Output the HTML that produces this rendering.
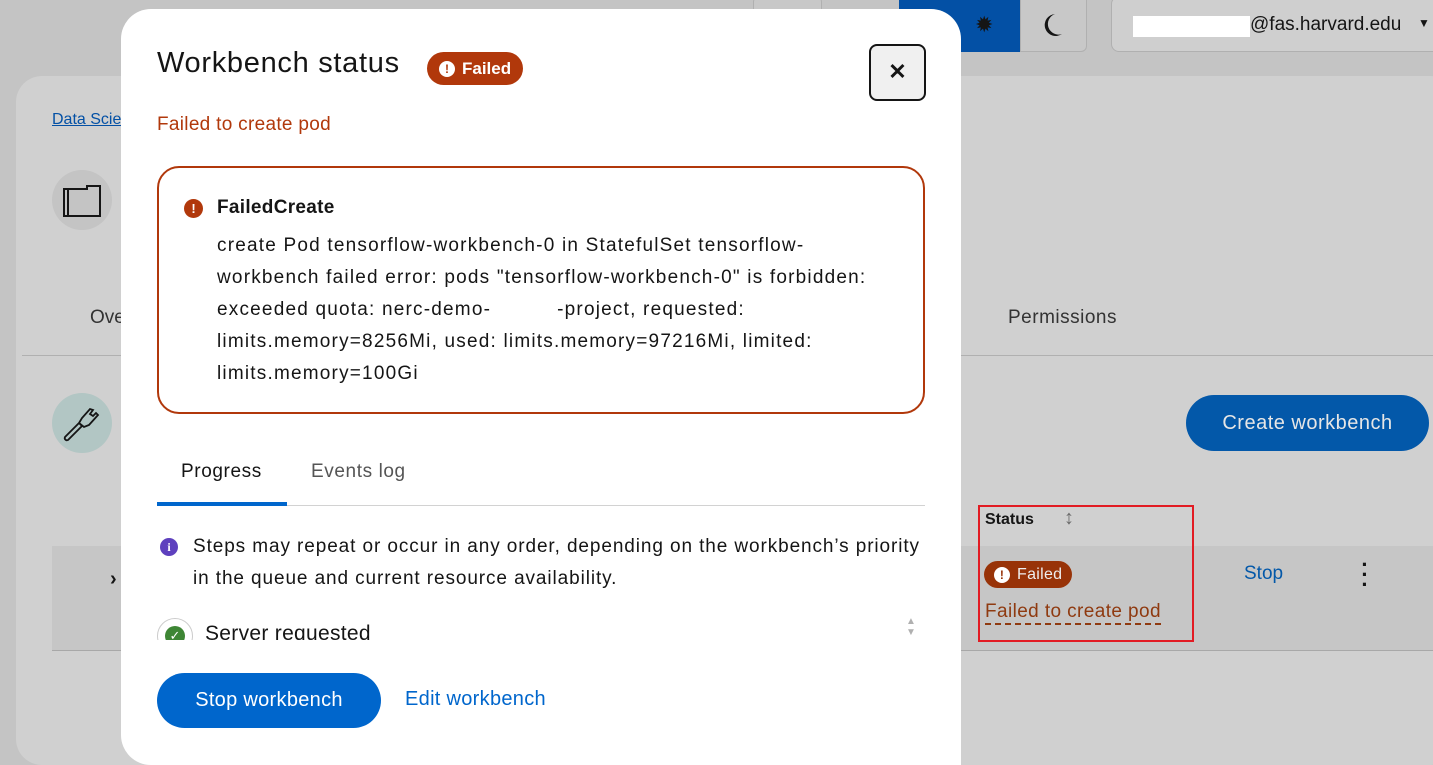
<!DOCTYPE html>
<html><head><meta charset="utf-8">
<style>
*{box-sizing:border-box;margin:0;padding:0}
body{width:1433px;height:765px;overflow:hidden;background:#c4c4c4;font-family:"Liberation Sans",sans-serif;position:relative;color:#151515}
.abs{position:absolute;white-space:nowrap}
.card{left:16px;top:76px;width:1440px;height:689px;background:#d0d0d0;border-radius:26px}
.modal{left:121px;top:9px;width:840px;height:756px;background:#fff;border-radius:30px 30px 0 30px}
.badge{display:inline-flex;align-items:center;background:#b1380b;color:#fff;border-radius:20px;font-size:17px;height:33px;padding:0 12px 0 12px;gap:7px}
.ex{width:16px;height:16px;border-radius:50%;background:#fff;color:#b1380b;font-weight:bold;font-size:12px;display:flex;align-items:center;justify-content:center}
</style></head><body>
<!-- background page -->
<div class="abs" style="left:753px;top:-4px;width:69px;height:56px;border:1px solid #b0b0b0;border-radius:6px;background:#c8c8c8"></div>
<div class="abs" style="left:899px;top:0;width:121px;height:52px;background:#0350a5"></div>
<div class="abs" style="left:975px;top:12px;font-size:22px;color:#151515">✹</div>
<div class="abs" style="left:1020px;top:-4px;width:67px;height:56px;background:#c8c8c8;border:1px solid #b0b0b0;border-radius:0 0 6px 0"></div>
<svg class="abs" style="left:1043px;top:13px" width="20" height="24" viewBox="0 0 20 24"><path d="M12 1A11 11 0 1 0 19 21A9 9 0 1 1 12 1z" fill="#151515"/></svg>
<div class="abs" style="left:1111px;top:-4px;width:340px;height:56px;border:1px solid #b0b0b0;border-radius:8px;background:#cfcfcf"></div>
<div class="abs" style="left:1133px;top:16px;width:117px;height:21px;background:#fff"></div>
<div class="abs" style="left:1250px;top:14px;font-size:19px;color:#151515">@fas.harvard.edu</div>
<div class="abs" style="left:1418px;top:16px;font-size:12px">▼</div>
<div class="abs card"></div>
<div class="abs" style="left:52px;top:111px;font-size:16px;color:#0350a5;text-decoration:underline">Data Science</div>
<div class="abs" style="left:52px;top:170px;width:60px;height:60px;border-radius:50%;background:#c4c4c4"></div>
<svg class="abs" style="left:63px;top:183px" width="38" height="34" viewBox="0 0 38 34"><path d="M1 6v27h36V3H24v3z M5 6v27" fill="none" stroke="#151515" stroke-width="2"/></svg>
<div class="abs" style="left:90px;top:307px;font-size:19px;color:#333">Overview</div>
<div class="abs" style="left:1008px;top:307px;font-size:19px;color:#333;letter-spacing:0.5px">Permissions</div>
<div class="abs" style="left:22px;top:355px;width:1420px;height:1px;background:#b0b0b0"></div>
<div class="abs" style="left:52px;top:393px;width:60px;height:60px;border-radius:50%;background:#b2c6c4"></div>
<svg class="abs" style="left:62px;top:403px" width="40" height="40" viewBox="0 0 40 40"><path d="M3 34l14-14 3 3-14 14c-2 1-4-1-3-3z M17 20l3-5 8-9 3 1-3 4 3 2 3-3 2 2-9 10-5 2z" fill="none" stroke="#151515" stroke-width="1.8"/></svg>
<div class="abs" style="left:1186px;top:395px;width:243px;height:56px;border-radius:28px;background:#0358a9;color:#e6e6e6;font-size:20px;text-align:center;line-height:56px;letter-spacing:0.5px">Create workbench</div>
<div class="abs" style="left:52px;top:546px;width:1400px;height:105px;background:#c6c6c6;border-bottom:1px solid #a8a8a8"></div>
<div class="abs" style="left:110px;top:568px;font-size:20px;font-weight:bold">›</div>
<div class="abs" style="left:978px;top:505px;width:216px;height:137px;border:2px solid #e21b23"></div>
<div class="abs" style="left:985px;top:511px;font-size:16px;font-weight:bold">Status</div>
<div class="abs" style="left:1064px;top:507px;font-size:20px;color:#6a6a6a;font-weight:bold">↕</div>
<div class="abs badge" style="left:984px;top:561px;height:27px;background:#983308;font-size:16px;padding:0 10px;color:#eee;letter-spacing:0.3px"><span class="ex" style="color:#983308">!</span>Failed</div>
<div class="abs" style="left:985px;top:601px;font-size:19px;color:#8f3a10;border-bottom:2px dashed #8f3a10;line-height:22px;letter-spacing:0.4px">Failed to create pod</div>
<div class="abs" style="left:1244px;top:563px;font-size:19px;color:#0358a9">Stop</div>
<div class="abs" style="left:1358px;top:560px;font-size:22px;font-weight:bold;line-height:10px;width:14px;text-align:center">·<br>·<br>·</div>

<!-- modal -->
<div class="abs modal"></div>
<div class="abs" style="left:157px;top:47px;font-size:29px;color:#151515;letter-spacing:0.7px">Workbench status</div>
<div class="abs badge" style="left:427px;top:52px;font-weight:bold"><span class="ex">!</span>Failed</div>
<div class="abs" style="left:869px;top:44px;width:57px;height:57px;border:2px solid #151515;border-radius:8px;background:#f0f0f0;text-align:center;line-height:52px;font-size:22px;font-weight:bold">✕</div>
<div class="abs" style="left:157px;top:114px;font-size:19px;color:#b1380b;letter-spacing:0.3px">Failed to create pod</div>
<div class="abs" style="left:157px;top:166px;width:768px;height:248px;border:2px solid #b1380b;border-radius:22px"></div>
<div class="abs ex" style="left:184px;top:199px;width:19px;height:19px;background:#b1380b;color:#fff;font-size:13px">!</div>
<div class="abs" style="left:217px;top:197px;font-size:19px;font-weight:bold;letter-spacing:0.3px">FailedCreate</div>
<div class="abs" style="left:217px;top:230px;font-size:19px;line-height:32px;letter-spacing:1.2px">create Pod tensorflow-workbench-0 in StatefulSet tensorflow-<br>workbench failed error: pods "tensorflow-workbench-0" is forbidden:<br>exceeded quota: nerc-demo-<span style="display:inline-block;width:66px"></span>-project, requested:<br>limits.memory=8256Mi, used: limits.memory=97216Mi, limited:<br>limits.memory=100Gi</div>
<div class="abs" style="left:181px;top:461px;font-size:19px;letter-spacing:0.6px">Progress</div>
<div class="abs" style="left:311px;top:461px;font-size:19px;color:#555;letter-spacing:0.6px">Events log</div>
<div class="abs" style="left:157px;top:505px;width:768px;height:1px;background:#d2d2d2"></div>
<div class="abs" style="left:157px;top:502px;width:130px;height:4px;background:#0066cc"></div>
<div class="abs" style="left:160px;top:538px;width:18px;height:18px;border-radius:50%;background:#5e40be;color:#fff;font-size:12px;font-weight:bold;text-align:center;line-height:18px;font-family:'Liberation Serif',serif">i</div>
<div class="abs" style="left:193px;top:531px;font-size:19px;line-height:32px;color:#151515;letter-spacing:0.9px">Steps may repeat or occur in any order, depending on the workbench’s priority<br>in the queue and current resource availability.</div>
<div class="abs" style="left:121px;top:610px;width:840px;height:30px;overflow:hidden">
 <div class="abs" style="left:36px;top:8px;width:36px;height:36px;border-radius:50%;border:1px solid #ccc"></div>
 <div class="abs" style="left:44px;top:16px;width:20px;height:20px;border-radius:50%;background:#3e8635;color:#fff;font-size:13px;text-align:center;line-height:20px">✓</div>
 <div class="abs" style="left:84px;top:12px;font-size:21px;letter-spacing:0.3px">Server requested</div>
</div>
<div class="abs" style="left:906px;top:616px;font-size:10px;color:#b0b0b0;line-height:11px">▲<br>▼</div>
<div class="abs" style="left:157px;top:673px;width:224px;height:55px;border-radius:28px;background:#0066cc;color:#fff;font-size:20px;text-align:center;line-height:55px;letter-spacing:0.3px">Stop workbench</div>
<div class="abs" style="left:405px;top:688px;font-size:20px;color:#0066cc;letter-spacing:0.3px">Edit workbench</div>
</body></html>
